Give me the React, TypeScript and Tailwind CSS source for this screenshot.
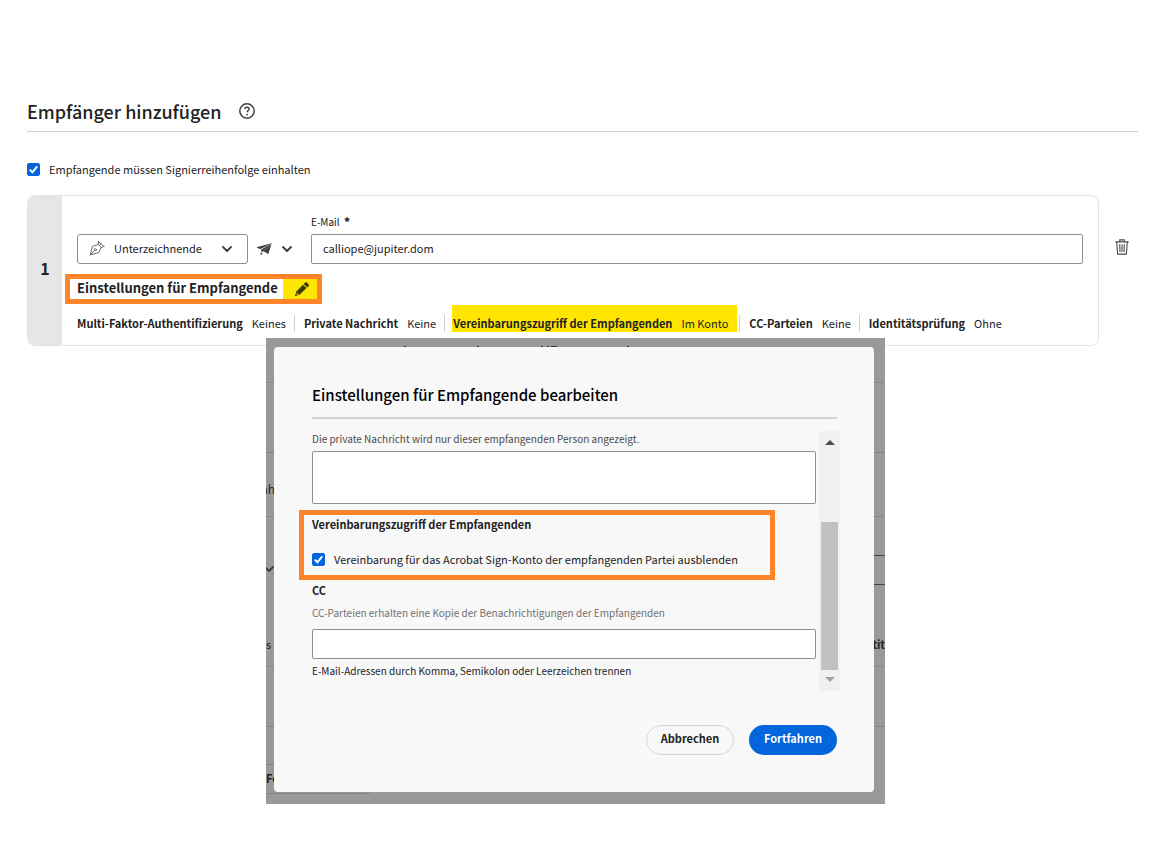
import { useState } from "react";
import type { ReactNode } from "react";

function HelpIcon() {
  return (
    <svg viewBox="0 0 18 18" className="size-[18px]" fill="none" stroke="#3f3f3f" strokeWidth="1.5" aria-hidden="true">
      <circle cx="9" cy="9" r="7.2" />
      <path d="M6.9 7.1C6.9 5.9 7.8 5.2 9 5.2s2.1.7 2.1 1.8c0 1.5-2 1.6-2 3.3" />
      <circle cx="9.1" cy="12.6" r=".9" fill="#3f3f3f" stroke="none" />
    </svg>
  );
}

function Chevron({ className = "" }: { className?: string }) {
  return (
    <svg viewBox="0 0 10 6" className={`h-[6px] w-[10px] ${className}`} fill="none" stroke="#3c3c3c" strokeWidth="1.8" strokeLinecap="round" strokeLinejoin="round" aria-hidden="true">
      <path d="M1 1l4 4 4-4" />
    </svg>
  );
}

function PenIcon({ className = "" }: { className?: string }) {
  return (
    <svg viewBox="0 0 16 16" className={`size-4 ${className}`} fill="none" stroke="#6a6a6a" strokeWidth="1" strokeLinejoin="round" strokeLinecap="round" aria-hidden="true">
      <path d="M9.300 1.200v3.200l3 3.100 2.900-1.100" />
      <path d="M9.300 4.400L3.400 6.400 1.300 14.900l8.400-2.300 2.600-5.100" />
      <path d="M1.300 14.900l4.200-4.300" />
      <circle cx="6.400" cy="9.700" r="1.100" />
      <path d="M9.300 1.600l5.500 4.800M10.800 4.800l1.300-1.200" />
    </svg>
  );
}

function PlaneIcon() {
  return (
    <svg viewBox="0 0 16 14" className="h-[14px] w-4" fill="#3f3f3f" aria-hidden="true">
      <path d="M15.600 1.200L.4 5.300l3.700 1.900z" />
      <path d="M15.600 1.200L5 7.700l.3 1.900 1.300.5z" />
      <path d="M15.600 1.200L7.400 9.200l5 2.700z" />
      <path d="M4.600 10.300l2 .9-1.800 2.300z" />
    </svg>
  );
}

function PencilIcon() {
  return (
    <svg viewBox="0 0 16 16" className="size-4" fill="#3d3800" aria-hidden="true">
      <path d="M11.2 1.600c.5-.5 1.100-.5 1.600 0l1.900 1.900c.4.4.4 1 0 1.400l-1.500 1.500-3.500-3.300z" />
      <path d="M9 3.800l3.500 3.300-6.700 6.500L.8 15.300l1.800-5z" />
      <path d="M2.900 11.300l2.100 2-2.700.9z" fill="#b3a300" />
    </svg>
  );
}

function TrashIcon() {
  return (
    <svg viewBox="0 0 14 16" className="h-4 w-[14px]" fill="none" stroke="#4b4b4b" strokeWidth="1.1" aria-hidden="true">
      <path d="M.3 2.900h13.400M4.700 2.800V.9h4.600v1.900M1.700 3.100l.9 12h8.800l.9-12" />
      <path d="M4.700 5.300l.3 7.700M7 5.300V13M9.300 5.300L9 13" />
    </svg>
  );
}

function Tick({ id, label, className }: { id: string; label: string; className: string }) {
  const [on, setOn] = useState(true);
  return (
    <div className="flex items-center">
      <span className="relative flex size-[13px] shrink-0">
        <input
          id={id}
          type="checkbox"
          checked={on}
          onChange={() => setOn(!on)}
          className="peer size-[13px] appearance-none rounded-[2px] border border-[#767676] bg-white checked:border-[#0265dc] checked:bg-[#0265dc]"
        />
        <svg viewBox="0 0 13 13" className="pointer-events-none absolute inset-0 hidden size-[13px] peer-checked:block" fill="none" stroke="#fff" strokeWidth="2" aria-hidden="true">
          <path d="M2.800 6.600l2.600 2.700 4.800-6" />
        </svg>
      </span>
      <label htmlFor={id} className={className}>
        {label}
      </label>
    </div>
  );
}

function Setting({ name, value, last = false }: { name: string; value: string; last?: boolean }) {
  return (
    <div className={`flex h-[17px] items-center gap-[9px] whitespace-nowrap pr-2 ${last ? "" : "border-r border-[#d0d0d0]"}`}>
      <dt className="font-bold">{name}</dt>
      <dd>{value}</dd>
    </div>
  );
}

function Remnant({ className, children }: { className: string; children?: ReactNode }) {
  return <div aria-hidden="true" className={`absolute ${className}`}>{children}</div>;
}

function SettingsDialog() {
  return (
    <div className="relative w-full overflow-hidden bg-[#999] pt-[9px] pr-[11px] pb-3 pl-2">
      <Remnant className="inset-x-0 top-11 h-px bg-[#888]" />
      <Remnant className="inset-x-0 top-[114px] h-px bg-[#858585]" />
      <Remnant className="inset-x-0 top-[178px] h-px bg-[#888]" />
      <Remnant className="right-0 top-[217px] h-[30px] w-5 border-y border-[#444]" />
      <Remnant className="inset-x-0 top-[328px] h-px bg-[#888]" />
      <Remnant className="inset-x-0 top-[388px] h-px bg-[#858585]" />
      <Remnant className="left-0 top-[426px] h-[30px] w-[104px] border-y border-[#858585]" />
      <Remnant className="-left-[5px] top-[141px] text-[12px] leading-5">ah</Remnant>
      <Remnant className="-left-[2px] top-[228px]"><Chevron /></Remnant>
      <Remnant className="left-0 top-[296px] text-[11px] leading-5">s</Remnant>
      <Remnant className="left-0 top-[430px] text-[11px] leading-5 font-bold">Fo</Remnant>
      <Remnant className="right-0 top-[296px] text-[11px] leading-5 font-bold">tit</Remnant>
      <svg viewBox="0 0 230 2" className="absolute left-[137px] top-[7px] h-[2px] w-[230px]" fill="#333" aria-hidden="true">
        <path d="M1 1h2v1H1zM74 1h2v1h-2zM138 1h2v1h-2zM144 1h2v1h-2zM148 1h6v1h-6zM224 1h2v1h-2z" />
      </svg>

      <section role="dialog" aria-labelledby="dialog-title" className="relative rounded bg-[#f8f8f8] pt-9 pr-[37px] pb-[37px] pl-[38px]">
        <h2 id="dialog-title" className="border-b-2 border-[#d0d0d0] pb-[10px] text-[15px] leading-6 font-medium text-black">
          Einstellungen für Empfangende bearbeiten
        </h2>
        <div className="-mr-[3px] mt-3 flex gap-[3px]">
          <div className="flex min-w-0 flex-1 flex-col">
            <label htmlFor="private-message" className="text-[10px] leading-4 text-[#4b4b4b]">
              Die private Nachricht wird nur dieser empfangenden Person angezeigt.
            </label>
            <textarea id="private-message" className="mt-1 h-[53px] resize-none rounded-[2px] border border-[#8e8e8e] bg-white px-3 py-2 text-[11px]" />
            <div className="mt-[6px] mr-[41px] -ml-[13px] border-[5px] border-[#fd8428] px-2 pb-[6px]">
              <h3 className="text-[11px] leading-[18px] font-bold">Vereinbarungszugriff der Empfangenden</h3>
              <div className="mt-4">
                <Tick id="hide-agreement" label="Vereinbarung für das Acrobat Sign-Konto der empfangenden Partei ausblenden" className="pl-[9px] text-[11px] leading-5 whitespace-nowrap" />
              </div>
            </div>
            <label htmlFor="cc" className="text-[11px] leading-5 font-bold">CC</label>
            <p className="mt-[5px] text-[10px] leading-4 text-[#717171]">
              CC-Parteien erhalten eine Kopie der Benachrichtigungen der Empfangenden
            </p>
            <input id="cc" type="text" className="mt-2 h-[30px] rounded-[2px] border border-[#8e8e8e] bg-white px-3 text-[11px]" />
            <p className="mt-1 text-[10px] leading-4">E-Mail-Adressen durch Komma, Semikolon oder Leerzeichen trennen</p>
          </div>
          <div aria-hidden="true" className="flex h-[260px] w-[21px] flex-col items-center bg-[#f1f1f1]">
            <svg viewBox="0 0 10 5" className="mt-[9px] h-[5px] w-[10px]" fill="#4d4d4d"><path d="M5 0l5 5H0z" /></svg>
            <div className="mt-auto h-[148px] w-[17px] bg-[#c1c1c1]" />
            <svg viewBox="0 0 10 5" className="mt-[7px] mb-[9px] h-[5px] w-[10px]" fill="#a3a3a3"><path d="M0 0h10L5 5z" /></svg>
          </div>
        </div>
        <div className="mt-[34px] flex justify-end gap-[15px]">
          <button type="button" className="h-[30px] w-[88px] rounded-full border border-[#d5d5d5] pb-1 text-[11px] font-bold">Abbrechen</button>
          <button type="button" className="h-[30px] w-[88px] rounded-full bg-[#0265dc] pb-1 text-[11px] font-bold text-white">Fortfahren</button>
        </div>
      </section>
    </div>
  );
}

export default function App() {
  const [email, setEmail] = useState("calliope@jupiter.dom");
  return (
    <main className="min-h-screen bg-white pt-24 pb-10 font-['Noto_Sans_CJK_SC','Open_Sans',sans-serif] text-[11px] text-[#222]">
      <header className="mr-[14px] ml-[27px] flex h-9 items-start gap-[17px] border-b border-[#d0d0d0]">
        <h1 className="text-[18px] leading-[30px] font-medium">Empfänger hinzufügen</h1>
        <button type="button" aria-label="Hilfe" className="mt-[6px]"><HelpIcon /></button>
      </header>

      <div className="mt-[27px] ml-[27px]">
        <Tick id="signing-order" label="Empfangende müssen Signierreihenfolge einhalten" className="pl-[9px] text-[11px] leading-5" />
      </div>

      <div className="mt-4 mr-[23px] ml-[27px] flex gap-4">
        <section className="flex h-[151px] min-w-0 flex-1 overflow-hidden rounded-lg border border-[#e3e3e3]">
          <div className="flex w-[34px] shrink-0 items-center justify-center bg-[#e6e6e6] pb-[6px] text-[16px] font-bold">1</div>
          <div className="min-w-0 flex-1 pt-4 pr-[15px] pl-[15px]">
            <div className="flex items-end">
              <div className="relative w-[171px] shrink-0">
                <PenIcon className="pointer-events-none absolute top-[6px] left-3" />
                <select aria-label="Rolle" className="h-[30px] w-full appearance-none rounded-[3px] border border-[#8e8e8e] bg-white pb-[2px] pl-9 text-[11px]">
                  <option>Unterzeichnende</option>
                </select>
                <Chevron className="pointer-events-none absolute top-3 right-4" />
              </div>
              <button type="button" aria-label="Versandart" className="ml-2 flex h-[30px] w-[55px] shrink-0 items-center gap-[10px]">
                <PlaneIcon />
                <Chevron />
              </button>
              <div className="flex min-w-0 flex-1 flex-col">
                <label htmlFor="email" className="flex gap-1 pb-[2px] text-[10px] leading-5">
                  E-Mail <span className="text-[13px] font-bold">*</span>
                </label>
                <input id="email" type="email" value={email} onChange={(e) => setEmail(e.target.value)} className="h-[30px] rounded-[2px] border border-[#8e8e8e] bg-white px-[11px] pb-[2px] text-[11px]" />
              </div>
            </div>
            <div className="mt-[10px] -ml-3 flex w-fit border-[5px] border-[#fd8428]">
              <h2 className="h-5 w-[213px] pl-[7px] text-[13px] leading-[18px] font-bold whitespace-nowrap">Einstellungen für Empfangende</h2>
              <button type="button" aria-label="Einstellungen bearbeiten" className="flex h-5 w-[34px] items-center justify-center bg-[#ffe600] pl-1">
                <PencilIcon />
              </button>
            </div>
            <dl className="mt-px flex h-[27px] items-end gap-[9px] text-[11px] leading-[17px]">
              <Setting name="Multi-Faktor-Authentifizierung" value="Keines" />
              <Setting name="Private Nachricht" value="Keine" />
              <div className="-mr-[7px] -ml-[2px] flex h-[27px] items-end gap-[9px] bg-[#ffe600] pr-[9px] pl-px whitespace-nowrap">
                <dt className="font-bold">Vereinbarungszugriff der Empfangenden</dt>
                <dd>Im Konto</dd>
              </div>
              <div aria-hidden="true" className="h-[17px] w-px bg-[#d0d0d0]" />
              <Setting name="CC-Parteien" value="Keine" />
              <Setting name="Identitätsprüfung" value="Ohne" last />
            </dl>
          </div>
        </section>
        <button type="button" aria-label="Empfänger löschen" className="mt-[44px] h-4 w-[14px] shrink-0"><TrashIcon /></button>
      </div>

      <div className="mx-auto -mt-2 w-full max-w-[620px] pr-px">
        <SettingsDialog />
      </div>
    </main>
  );
}
